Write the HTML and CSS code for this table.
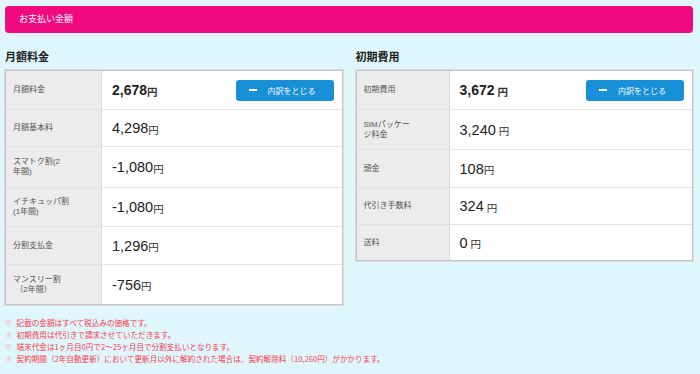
FILE: index.html
```html
<!DOCTYPE html>
<html lang="ja">
<head>
<meta charset="utf-8">
<link rel="stylesheet" href="styles.css">
</head>
<body>
<div class="bar">お支払い金額</div>
<div class="cols">
  <section class="col">
    <h2>月額料金</h2>
    <div class="table">
      <div class="row r38">
        <div class="label">月額料金</div>
        <div class="value"><span class="num bold">2,678</span><span class="yen bold">円</span>
          <button class="btn"><span class="minus"></span>内訳をとじる</button></div>
      </div>
      <div class="row r37">
        <div class="label">月額基本料</div>
        <div class="value"><span class="num">4,298</span><span class="yen">円</span></div>
      </div>
      <div class="row r41">
        <div class="label">スマトク割(2<br>年間)</div>
        <div class="value"><span class="num">-1,080</span><span class="yen">円</span></div>
      </div>
      <div class="row r39">
        <div class="label">イチキュッパ割<br>(1年間)</div>
        <div class="value"><span class="num">-1,080</span><span class="yen">円</span></div>
      </div>
      <div class="row r38">
        <div class="label">分割支払金</div>
        <div class="value"><span class="num">1,296</span><span class="yen">円</span></div>
      </div>
      <div class="row r40">
        <div class="label">マンスリー割<br>&nbsp;（2年間）</div>
        <div class="value"><span class="num">-756</span><span class="yen">円</span></div>
      </div>
    </div>
  </section>
  <section class="col">
    <h2>初期費用</h2>
    <div class="table">
      <div class="row r38">
        <div class="label">初期費用</div>
        <div class="value"><span class="num bold">3,672</span><span class="yen bold sp">円</span>
          <button class="btn"><span class="minus"></span>内訳をとじる</button></div>
      </div>
      <div class="row r40">
        <div class="label">SIMパッケー<br>ジ料金</div>
        <div class="value"><span class="num">3,240</span><span class="yen sp">円</span></div>
      </div>
      <div class="row r38">
        <div class="label">頭金</div>
        <div class="value"><span class="num">108</span><span class="yen">円</span></div>
      </div>
      <div class="row r37">
        <div class="label">代引き手数料</div>
        <div class="value"><span class="num">324</span><span class="yen sp">円</span></div>
      </div>
      <div class="row r36">
        <div class="label">送料</div>
        <div class="value"><span class="num">0</span><span class="yen sp">円</span></div>
      </div>
    </div>
  </section>
</div>
<ul class="notes">
  <li><span class="mark">※</span>記載の金額はすべて税込みの価格です。</li>
  <li><span class="mark">※</span>初期費用は代引きで請求させていただきます。</li>
  <li><span class="mark">※</span>端末代金は1ヶ月目0円で2～25ヶ月目で分割支払いとなります。</li>
  <li><span class="mark">※</span>契約期間（2年自動更新）において更新月以外に解約された場合は、契約解除料（10,260円）がかかります。</li>
</ul>
</body>
</html>
```
FILE: styles.css
```css
* { box-sizing: border-box; }
html, body { margin: 0; height: 100%; }
body {
  background: #e0f6fd;
  padding: 6px 7px 0 5px;
  font-family: "Liberation Sans", "Noto Sans CJK JP", sans-serif;
  color: #222;
}
.bar {
  height: 27px;
  background: #f0097f;
  border-radius: 4px;
  color: #fff;
  font-size: 9px;
  line-height: 27px;
  padding-left: 14px;
}
.cols {
  display: flex;
  gap: 13px;
  align-items: flex-start;
}
.col { flex: 1; }
h2 {
  margin: 17px 0 6px;
  font-size: 11px;
  line-height: 14px;
  font-weight: bold;
  color: #222;
}
.table {
  border: 1px solid #c4c4c4;
  box-shadow: 0 0 0 1px #dcdcdc;
  background: #fff;
}
.row {
  display: flex;
  border-top: 1px solid #e4e4e4;
}
.row:first-child { border-top: none; }
.r36 { height: 36px; }
.r37 { height: 37px; }
.r38 { height: 38px; }
.r39 { height: 39px; }
.r40 { height: 40px; }
.r41 { height: 41px; }
.label {
  width: 96px;
  flex: none;
  background: #ececec;
  border-right: 1px solid #dadada;
  font-size: 8px;
  line-height: 10px;
  color: #555;
  padding-left: 7px;
  display: flex;
  align-items: center;
}
.col:last-child .label { width: 93px; }
.value {
  flex: 1;
  display: flex;
  align-items: center;
  padding-left: 10px;
  padding-right: 8px;
}
.num {
  font-size: 14.5px;
  color: #222;
}
.yen {
  font-size: 10.5px;
  color: #333;
  margin-top: 2px;
}
.yen.sp { margin-left: 3px; }
.bold { font-weight: bold; }
.num.bold { font-size: 14px; }
.btn {
  margin-left: auto;
  width: 98px;
  height: 21px;
  border: none;
  border-radius: 3px;
  background: #1790d8;
  color: #fff;
  font-family: "Noto Sans CJK JP", sans-serif;
  font-size: 8px;
  display: flex;
  align-items: center;
  padding: 0 0 0 13px;
  gap: 11px;
}
.minus {
  width: 8px;
  height: 2px;
  background: #fff;
  display: block;
}
.notes {
  list-style: none;
  margin: 12px 0 0;
  padding: 0;
  font-family: "Noto Sans CJK JP", sans-serif;
  font-size: 7.6px;
  line-height: 12px;
  color: #f53a4c;
}
.mark {
  color: #f9a3b0;
  margin-right: 4px;
}
```
